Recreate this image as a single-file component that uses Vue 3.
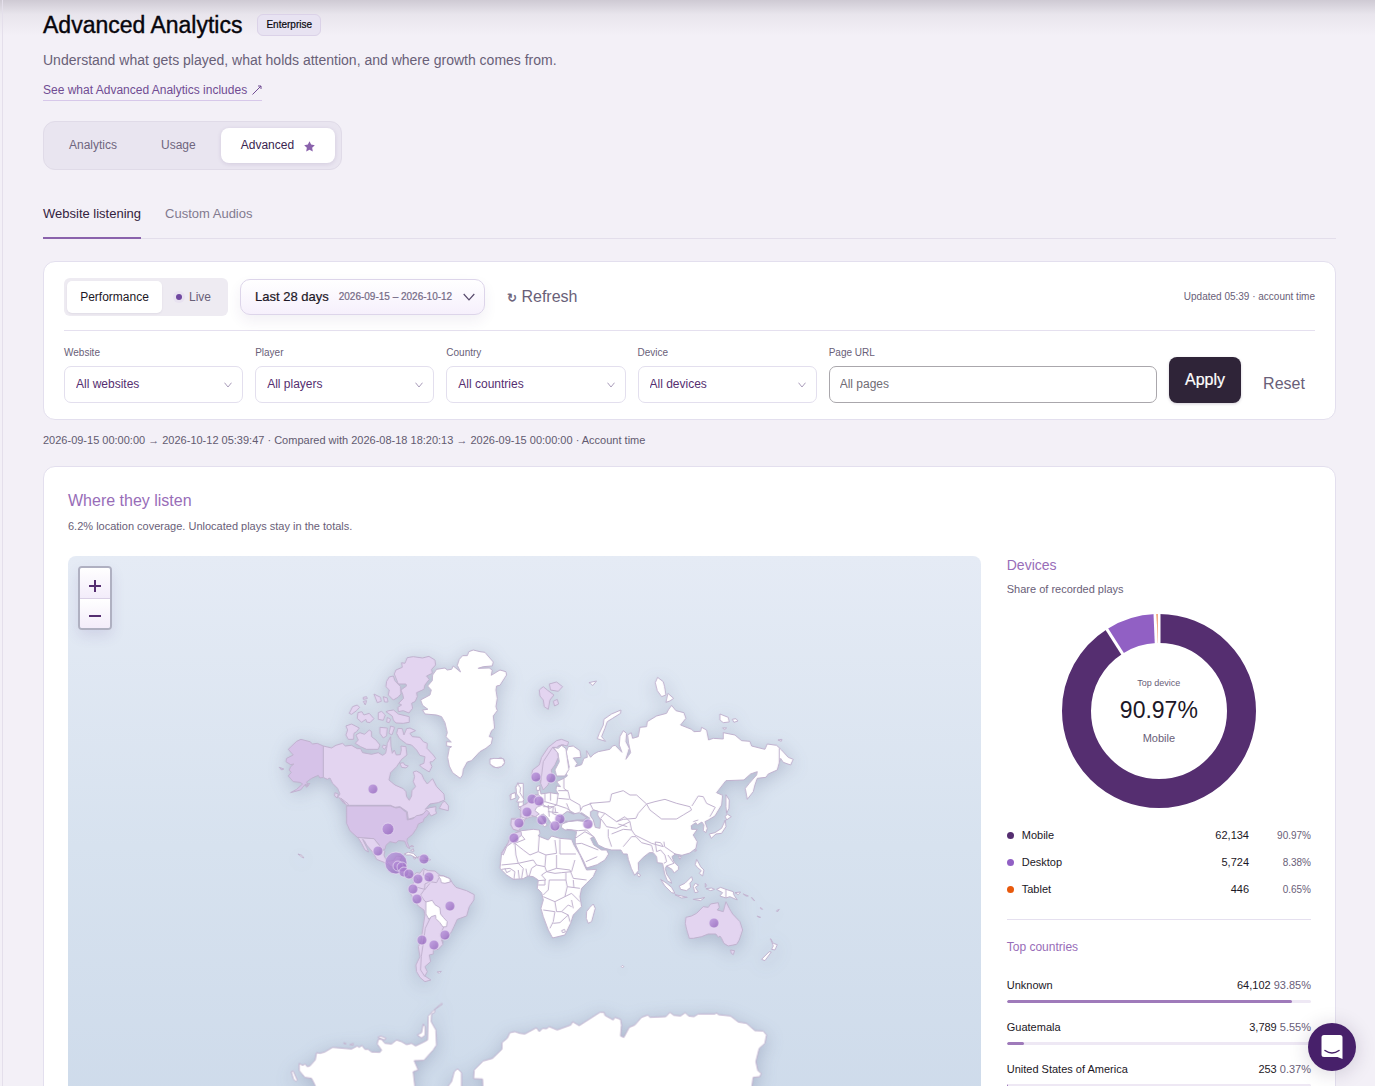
<script setup>
import { ref } from 'vue'

const filters = [
  { id: 'website', label: 'Website', value: 'All websites' },
  { id: 'player', label: 'Player', value: 'All players' },
  { id: 'country', label: 'Country', value: 'All countries' },
  { id: 'device', label: 'Device', value: 'All devices' }
]
const pageUrl = ref('')

const devices = [
  { name: 'Mobile', plays: '62,134', share: '90.97%', color: '#552e70' },
  { name: 'Desktop', plays: '5,724', share: '8.38%', color: '#9160c4' },
  { name: 'Tablet', plays: '446', share: '0.65%', color: '#e8590c' }
]

const countries = [
  { name: 'Unknown', plays: '64,102', share: '93.85%', bar: 93.85 },
  { name: 'Guatemala', plays: '3,789', share: '5.55%', bar: 5.55 },
  { name: 'United States of America', plays: '253', share: '0.37%', bar: 0.37 }
]

// Play clusters: x, y, radius
const pins = [
  [373, 789, 5], [388, 829, 6], [378, 851, 5], [396, 863, 11], [424, 859, 5],
  [398, 866, 5], [402, 867, 5], [404, 872, 5], [409, 874, 5], [418, 879, 5],
  [429, 877, 5], [413, 889, 5], [417, 899, 5], [450, 906, 5], [445, 935, 5],
  [422, 940, 5], [434, 945, 5], [536, 777, 5], [551, 778, 5], [532, 799, 5],
  [539, 801, 5], [527, 812, 5], [519, 823, 5], [542, 820, 5], [560, 819, 5],
  [555, 826, 5], [588, 824, 5], [514, 838, 5], [714, 923, 5]
]
</script>

<template>
  <div class="shell">
    <main class="page">
      <div class="title-row">
        <h1>Advanced Analytics</h1>
        <span class="badge">Enterprise</span>
      </div>
      <p class="lead">Understand what gets played, what holds attention, and where growth comes from.</p>
      <a class="more" href="#">See what Advanced Analytics includes
        <svg width="10" height="10" viewBox="0 0 10 10" fill="none" stroke="currentColor"><path d="M.5 9.5 9 1M6 1H9v3" /></svg>
      </a>

      <div>
        <nav class="segments">
          <button type="button">Analytics</button>
          <button type="button">Usage</button>
          <button type="button" class="active">Advanced
            <svg width="11" height="11" viewBox="0 0 12 12" fill="#8a62ac"><path d="M6 .3 7.800 3.900 11.800 4.500 8.900 7.300 9.600 11.400 6 9.600 2.400 11.400 3.100 7.300 .2 4.500 4.200 3.900Z" /></svg>
          </button>
        </nav>
      </div>

      <nav class="tabs">
        <button type="button" class="active">Website listening</button>
        <button type="button">Custom Audios</button>
      </nav>

      <section class="card controls">
        <div class="toolbar">
          <div class="mode">
            <button type="button" class="active">Performance</button>
            <button type="button"><i class="live-dot"></i>Live</button>
          </div>
          <button type="button" class="range">
            <span class="range-name">Last 28 days</span>
            <span class="range-dates">2026-09-15 – 2026-10-12</span>
            <svg width="12" height="8" viewBox="0 0 12 8" fill="none" stroke="#574a6b" stroke-width="1.200"><path d="M.7 1 6 6.800 11.300 1" /></svg>
          </button>
          <button type="button" class="refresh"><span>↻</span> Refresh</button>
          <span class="updated">Updated 05:39 · account time</span>
        </div>
        <form class="filters" @submit.prevent>
          <div v-for="f in filters" :key="f.id" class="field">
            <label :for="f.id">{{ f.label }}</label>
            <div class="select">
              <select :id="f.id"><option>{{ f.value }}</option></select>
              <svg width="8" height="6" viewBox="0 0 8 6" fill="none" stroke="#a99cba"><path d="M.5.7 4 5 7.500.7" /></svg>
            </div>
          </div>
          <div class="field">
            <label for="page-url">Page URL</label>
            <input id="page-url" v-model="pageUrl" type="text" placeholder="All pages">
          </div>
          <button type="submit" class="apply">Apply</button>
          <button type="reset" class="reset">Reset</button>
        </form>
      </section>

      <p class="period">2026-09-15 00:00:00 → 2026-10-12 05:39:47 · Compared with 2026-08-18 18:20:13 → 2026-09-15 00:00:00 · Account time</p>

      <section class="card listen">
        <h2>Where they listen</h2>
        <p class="note">6.2% location coverage. Unlocated plays stay in the totals.</p>
        <div class="split">
          <div class="map">
            <svg class="world" viewBox="68 556 913 580" preserveAspectRatio="xMidYMin slice" role="img" aria-label="Plays by country">
              <defs>
                <linearGradient id="sea" x1="0" y1="0" x2="0" y2="1">
                  <stop offset="0" stop-color="#e5ebf5" />
                  <stop offset="0.500" stop-color="#d7e2ef" />
                  <stop offset="1" stop-color="#cddaea" />
                </linearGradient>
                <linearGradient id="pin" x1="0" y1="0" x2="1" y2="1">
                  <stop offset="0" stop-color="#bd99df" />
                  <stop offset="1" stop-color="#8b58b5" />
                </linearGradient>
              </defs>
              <rect x="0" y="556" width="1400" height="580" fill="url(#sea)" />
              <g class="land">
                <!-- Alaska, Canada and Greenland -->
                <g transform="translate(270 640) scale(.333333)">
                  <path class="some" d="M160 318 185 324 198 316 218 310 226 318 245 316 262 326 272 326 278 338 305 343 325 338 338 346 347 340 350 325 352 310 362 290 363 318 367 340 373 330 379 345 391 344 394 330 393 318 408 320 411 345 395 358 380 380 362 398 357 420 375 435 400 446 408 455 410 470 418 481 425 468 426 452 437 440 430 425 434 410 430 396 440 393 455 402 462 418 472 432 488 416 500 440 522 462 524 480 505 488 480 492 466 508 480 503 498 500 497 512 500 520 484 528 474 515 440 530 415 538 412 515 390 500 375 502 362 496 238 496 222 490 205 470 210 462 203 445 188 430 180 414 172 418 160 412Z" />
                  <path class="some" d="M412 53 430 50 458 54 477 49 495 60 497 75 485 88 487 100 470 108 478 118 465 135 462 148 440 158 442 170 436 184 425 190 428 205 417 219 400 212 385 215 384 202 395 195 386 190 401 175 398 162 393 150 410 138 408 132 385 132 373 102 378 90 397 82 395 68 405 70ZM358 111 370 108 375 122 392 140 393 162 384 172 370 180 355 165 358 150 348 140 350 124ZM357 212 371 210 385 222 418 230 418 247 400 250 378 249 370 240 367 228 348 215ZM384 265 397 266 402 285 410 266 420 264 437 272 420 280 427 290 450 292 460 305 472 310 471 325 490 345 497 355 488 365 480 366 486 380 478 396 455 382 449 375 462 370 465 350 450 346 440 330 425 315 410 312 388 295 380 280ZM258 285 270 278 284 283 298 270 305 275 305 290 318 300 330 315 325 328 312 328 290 328 272 320 256 310 265 300ZM228 258 245 252 268 264 260 275 252 280 251 298 235 298 228 285 233 270ZM330 262 352 264 350 288 340 294 330 280ZM362 258 374 262 366 285 357 280ZM264 218 276 215 282 225 298 220 312 236 300 248 290 246 288 238 275 247 262 235ZM325 218 335 214 346 225 340 241 325 238ZM238 220 248 200 262 195 269 202 260 212 245 223ZM312 162 332 172 334 184 322 188ZM280 172 290 170 292 176 280 178ZM280 184 290 182 286 195ZM340 170 352 174 354 186 344 186ZM352 232 362 238 358 248 350 246ZM340 315 350 318 344 328 337 322ZM390 370 400 368 405 375 415 378 408 384 395 382ZM195 458 205 462 202 474 194 468ZM212 474 235 492 232 498ZM518 487 525 484 536 498 535 512 508 505Z" />
                  <path class="more-plays" d="M160 318 142 310 128 312 120 305 93 298 80 304 55 328 70 345 50 355 48 365 62 374 72 372 62 380 58 390 64 397 55 408 70 425 90 427 98 432 80 448 62 458 92 450 103 436 115 438 110 426 125 415 145 406 150 414 160 412ZM28 382 42 387 35 390ZM105 434 120 430 110 442Z" />
                  <path d="M562 76 568 58 578 47 592 47 597 35 610 30 630 35 645 37 670 66 667 78 640 80 625 85 658 84 667 90 664 106 690 90 708 95 710 105 690 136 680 138 678 150 682 175 678 200 682 212 670 228 672 245 674 265 665 272 658 290 668 292 664 312 648 325 630 335 605 362 592 366 580 388 578 405 571 415 548 398 538 378 533 352 538 325 545 320 530 318 530 305 544 306 528 290 532 278 525 248 515 230 500 225 465 222 458 210 474 208 458 196 452 180 480 165 484 150 473 138 487 122 488 105 500 88 525 84 532 90 545 88 550 78 572 96ZM660 356 680 360 692 352 704 360 702 374 685 384 668 380 660 372 670 366ZM728 462 735 458 732 475 722 478 720 465ZM745 430 738 440 740 455 750 460 745 500 760 500 760 430Z" />
                </g>

                <!-- United States, Central and South America -->
                <g transform="translate(270 800) scale(.333333)">
                  <path class="more-plays" d="M230 18 362 18 378 24 390 22 410 38 412 60 430 56 440 47 458 44 470 30 478 38 472 48 462 56 460 65 445 72 440 85 428 103 412 116 411 125 420 146 412 142 404 123 385 122 378 129 360 125 348 136 345 148 336 148 325 132 312 116 280 114 262 112 240 92 230 70Z" />
                  <path class="some" d="M264 112 280 114 312 116 325 132 338 150 345 154 342 165 350 184 370 182 380 168 396 170 388 186 390 194 410 196 409 214 430 226 440 218 450 220 460 206 475 212 495 213 510 226 522 228 540 236 548 250 558 262 590 272 613 284 612 300 598 320 590 348 562 358 552 380 545 395 530 415 515 420 519 433 505 448 490 450 490 462 478 465 482 485 465 500 472 515 465 528 483 540 465 545 450 532 440 515 438 495 450 470 445 440 453 425 458 390 465 345 462 330 445 318 430 295 417 272 420 262 432 248 436 230 425 236 410 224 398 220 385 204 362 200 345 188 320 178 310 158 290 135 283 122 278 118 290 142 296 156 285 150 275 130Z" />
                  <path class="line" d="M350 184 362 200M386 190 382 204M409 215 404 220M436 228 444 240M462 210 460 225 478 232 480 245 465 252 464 268 435 260M464 268 452 285 462 300 468 306M480 245 500 248 508 232M480 250 464 270M522 230 522 248 545 244M483 350 466 385 460 430 454 470 452 510 465 530M522 378 512 405 520 428" />
                  <path d="M468 306 487 301 495 314 510 323 512 342 520 352 532 365 530 380 519 381 510 368 498 356 497 346 484 350 477 358 468 342ZM505 227 520 228 540 236 541 246 525 250 514 248 512 238ZM403 162 415 157 430 160 444 174 435 172 422 165 410 165ZM430 172 438 174 434 178ZM502 516 514 514 508 520ZM420 140 432 140 426 136ZM422 152 430 146 432 154ZM84 162 96 166 102 174 94 170Z" />
                  <path class="some" d="M445 170 460 168 470 176 478 176 482 180 465 182 448 180Z" />
                </g>

                <!-- Europe and Asia -->
                <g transform="translate(490 670) scale(.333333)">
                  <path d="M235 230 250 228 270 242 273 262 250 264 262 280 256 290 275 284 282 265 292 262 290 242 302 262 312 252 325 245 360 238 368 228 376 226 396 247 388 225 390 200 400 182 410 190 408 215 418 235 408 268 422 248 416 220 413 195 424 188 428 205 445 200 450 172 470 170 472 155 500 138 530 130 535 120 545 106 558 122 582 128 588 145 572 165 605 178 612 185 632 184 635 172 650 180 656 210 670 205 700 207 700 188 735 195 755 212 780 214 785 228 825 238 832 222 860 226 875 240 895 262 910 268 902 285 880 277 872 265 868 278 862 300 835 312 828 322 802 325 795 345 790 365 772 388 766 355 778 340 800 315 802 305 782 312 762 330 708 332 680 368 698 376 695 405 675 438 655 450 645 455 652 475 648 488 640 482 642 465 636 456 622 465 618 458 604 467 605 478 622 478 610 495 622 515 618 535 600 549 576 556 556 552 546 560 552 575 566 590 566 598 553 609 546 598 530 588 526 595 530 612 542 630 545 640 532 632 524 612 518 580 502 578 500 560 490 548 478 548 460 562 445 578 446 602 434 616 424 595 415 568 412 552 400 552 393 540 365 540 345 535 325 525 312 500 302 505 312 525 335 540 350 540 356 552 345 570 322 584 290 594 282 575 268 548 256 522 256 505 260 485 245 480 225 480 214 472 216 462 235 455 262 452 290 455 300 445 275 428 262 435 245 425 230 428 215 442 210 458 208 468 198 482 190 478 185 462 172 442 160 432 152 436 162 452 172 466 163 470 148 452 140 440 125 440 105 447 100 465 88 482 70 478 63 465 65 445 92 445 95 425 85 415 100 408 112 398 125 385 135 375 145 375 143 352 149 350 153 372 180 368 205 372 198 360 200 348 212 350 200 335 222 325 232 318 225 300 238 292 232 262 228 248Z" />
                  <path d="M190 232 205 235 215 226 228 236 232 265 237 298 225 318 200 318 195 300 208 275 204 250ZM78 352 84 338 88 350 92 352 90 368 102 388 98 396 80 396 88 382 80 372ZM64 372 76 368 78 384 62 390ZM0 268 12 265 40 266 44 278 35 290 18 293 5 286 0 280ZM322 206 328 190 340 165 342 148 365 132 393 120 392 130 368 145 352 155 345 175 335 200 347 214ZM496 38 503 22 520 35 524 50 528 75 515 80 502 62ZM534 70 551 85 540 93 528 97ZM690 150 690 132 715 142 718 156 700 158ZM727 148 738 146 744 153 732 157ZM297 38 320 33 308 47 302 40ZM698 174 710 174 704 179ZM864 210 876 208 874 214ZM708 374 718 390 717 415 710 430 708 410ZM706 440 712 432 724 440 710 450ZM706 450 708 470 695 490 678 492 664 505 658 492 675 488 695 475ZM140 350 150 346 148 362 139 360Z" />
                  <path class="some" d="M125 315 128 300 148 285 155 262 175 232 200 212 215 208 236 216 232 228 215 224 200 232 188 232 203 248 205 262 195 285 184 300 186 318 174 345 160 360 152 340 150 325 130 332ZM148 60 160 50 172 60 192 75 180 90 175 118 163 110 160 90 150 78ZM178 42 200 36 218 50 205 64 182 60ZM190 94 202 88 206 102 194 108ZM92 410 112 400 125 385 135 375 147 375 158 388 160 404 140 412 135 422 148 432 136 440 125 436 105 445 93 440ZM64 448 100 447 96 466 86 482 70 478 63 465Z" />
                  <path class="line" d="M152 340 160 275 188 232M205 228 222 225M222 325 222 355 235 365 240 388 270 405 272 420M205 362 235 362M165 372 165 395 200 405 205 370M165 395 150 400 180 415 200 405 230 415 245 425M160 410 190 410 188 430 210 440M175 425 205 428M270 425 278 410 305 400M360 395 300 400 310 420 345 430M360 395 365 372 400 362 420 375 440 375 470 402 445 430 438 445 400 448 380 455 345 430 332 445 350 470 380 475 420 455M470 402 495 395 525 388 560 400 600 410 605 420 580 435 560 447 515 447 480 420 470 402M606 408 625 378 640 380 650 400 676 412 660 440M420 455 425 480 435 495 485 520 520 530 512 518 496 516M355 478 355 500 365 530M365 492 400 478 425 480M400 530 425 500 438 500 455 518 485 526 490 545M230 478 265 482 290 480 310 500M256 505 285 485 312 500M256 522 275 520 325 540M322 560 288 575M496 516 500 545 512 540 525 555 530 575 522 580M522 515 524 530 560 555M534 555 552 580 530 588M610 455 625 450M240 425 230 400M868 235 868 278M380 455 405 440 420 455M385 462 412 470M182 368 182 392M205 385 238 388M175 405 178 440M195 412 198 430" />
                  <path class="water" d="M302 425 312 420 325 424 323 435 332 450 330 475 316 472 310 450 302 438Z" />
                  <path class="water" d="M212 439 232 424 250 432 268 428 290 442 282 450 262 450 235 454 218 452Z" />
                </g>

                <!-- Africa and Oceania -->
                <g transform="translate(490 800) scale(.333333)">
                  <path d="M78 98 95 92 130 88 148 90 150 100 145 108 175 120 185 108 210 115 245 118 252 135 270 165 283 195 290 210 320 208 310 230 290 250 275 265 270 290 275 320 250 345 242 370 225 405 188 414 175 390 160 350 153 325 160 300 155 278 142 265 145 240 130 230 115 228 100 236 70 238 50 225 30 205 35 160 55 128 62 110ZM290 335 300 322 310 312 316 325 305 365 295 370 289 355ZM512 238 528 248 545 262 555 280 545 278 525 258ZM568 258 585 250 605 230 608 240 600 250 602 262 590 272 572 268ZM555 284 575 288 592 292 575 294ZM610 260 616 250 626 255 616 262 625 276 615 278ZM620 178 628 192 632 200 642 210 638 228 628 220 634 212 622 202 616 194ZM442 218 452 225 448 231 442 226ZM565 168 574 170 570 178ZM680 268 692 262 708 268 730 275 732 285 742 300 720 290 708 294 690 288 698 278ZM735 278 752 276 745 284ZM760 282 775 288 768 288ZM785 292 794 302 788 298ZM812 322 818 328 812 326ZM802 348 812 352 806 352ZM860 332 868 328 862 336ZM842 416 850 430 862 434 855 450 845 448 850 438ZM815 478 838 455 844 456 825 482ZM394 500 398 496 402 500 397 503ZM646 250 650 256 646 262ZM648 266 665 264 674 268 662 272ZM610 298 630 296 645 292 632 302ZM614 154 618 148 620 152Z" />
                  <path class="some" d="M35 160 55 128 62 110 78 98 93 94 95 106 70 125 50 140 40 165ZM588 352 605 348 620 340 640 320 655 322 662 312 685 308 688 322 682 330 700 335 708 305 718 325 728 342 750 365 758 390 748 420 740 433 715 438 702 430 695 415 690 408 685 412 678 402 655 402 635 410 610 415 598 415 590 388 586 370ZM722 450 734 452 730 464 724 460Z" />
                  <path class="line" d="M95 106 105 118 70 132M75 130 78 165 85 190 35 195M75 130 100 150 120 165 145 155 148 110M145 155 168 165 200 160 195 120M210 118 210 162 258 162M168 165 165 200 140 195 125 205 118 228M140 195 130 180 85 190 100 205 95 235M60 205 75 215 72 238M35 208 60 205M45 205 50 218 62 212M85 210 88 236M108 206 112 228M165 200 170 215 155 225 168 240 145 242M200 165 200 205 170 215 195 220 215 218 245 215 255 180M200 205 240 210 250 235 290 240M228 218 228 240 178 240 175 270 160 285M145 255 165 255 165 240M228 240 232 260 225 290 195 305 160 290M232 260 270 265M250 240 252 262M225 290 245 280 270 305M160 330 195 335 190 365 180 385M195 305 200 335 215 335 235 315 245 320M190 370 210 368 235 345M215 335 235 345M245 300 250 325M235 345 240 365M215 392 224 388 226 396 218 398ZM708 268 708 294" />
                </g>

                <!-- Antarctica -->
                <g transform="translate(270 980) scale(.333333)">
                  <path d="M150 360 135 315 125 295 105 292 88 272 88 250 98 256 106 252 112 260 120 258 136 240 140 218 150 220 165 216 188 202 245 207 262 198 268 202 276 196 285 208 295 208 305 216 330 217 335 210 322 192 325 178 335 178 345 190 365 192 380 180 395 185 410 194 425 190 437 198 460 187 473 180 475 108 490 92 515 70 518 72 495 88 494 98 485 102 484 125 498 150 500 195 490 210 462 241 433 242 445 270 430 275 435 318 440 360ZM640 360 638 297 611 296 613 270 640 243 668 235 696 208 696 188 712 175 720 158 735 155 750 160 765 162 800 143 808 155 818 145 830 146 838 140 862 150 903 135 908 125 928 137 990 97 1003 97 1005 106 1030 120 1035 112 1052 118 1055 135 1052 168 1062 172 1078 142 1095 135 1115 112 1134 105 1140 112 1188 110 1200 97 1212 106 1232 108 1246 98 1256 108 1272 110 1285 102 1336 102 1340 98 1345 104 1382 108 1405 126 1430 130 1455 152 1480 153 1490 165 1485 190 1468 205 1458 245 1464 272 1474 280 1470 290 1450 292 1446 320 1446 360ZM532 322 545 305 553 275 563 266 575 278 575 340 530 340ZM64 275 70 273 82 300 78 304 71 298ZM442 165 455 158 460 132 466 140 466 165 455 174ZM324 172 332 168 348 174 345 180ZM221 188 228 190 226 194ZM240 194 250 190 250 196Z" />
                </g>
              </g>
              <g class="pins">
                <circle v-for="(p, i) in pins" :key="i" :cx="p[0]" :cy="p[1]" :r="p[2]" />
              </g>
            </svg>
            <div class="zoom">
              <button type="button" aria-label="Zoom in"><svg width="12" height="12" viewBox="0 0 12 12" stroke="#552e70" stroke-width="2"><path d="M6 0v12M0 6h12" /></svg></button>
              <button type="button" aria-label="Zoom out"><svg width="12" height="12" viewBox="0 0 12 12" stroke="#552e70" stroke-width="2"><path d="M0 6h12" /></svg></button>
            </div>
          </div>

          <aside class="side">
            <h3>Devices</h3>
            <p class="note">Share of recorded plays</p>
            <div class="donut">
              <svg width="194" height="194" viewBox="-97 -97 194 194" fill="none" role="img" aria-label="Device share">
                <g transform="rotate(-90)" stroke-width="29">
                  <circle r="82.500" pathLength="10000" stroke="#9160c4" stroke-dasharray="838 9162" stroke-dashoffset="-9097" />
                  <circle r="82.500" pathLength="10000" stroke="#552e70" stroke-dasharray="9097 903" />
                </g>
                <path d="M-4 -97H0V-68H-3Z" fill="#e8590c" />
                <g stroke="#fff" stroke-width="3">
                  <path d="M0 -60V-98" />
                  <path d="M0 -60V-98" transform="rotate(-2.340)" />
                  <path d="M0 -60V-98" transform="rotate(-32.500)" />
                </g>
              </svg>
              <div class="donut-label">
                <span class="top">Top device</span>
                <strong>90.97%</strong>
                <span class="name">Mobile</span>
              </div>
            </div>
            <ul class="legend">
              <li v-for="d in devices" :key="d.name">
                <i :style="{ background: d.color }"></i>
                <span class="device">{{ d.name }}</span>
                <span class="plays">{{ d.plays }}</span>
                <span class="share">{{ d.share }}</span>
              </li>
            </ul>
            <h4>Top countries</h4>
            <ul class="countries">
              <li v-for="c in countries" :key="c.name">
                <div class="country"><span>{{ c.name }}</span><span>{{ c.plays }} <small>{{ c.share }}</small></span></div>
                <div class="track"><div class="bar" :style="{ width: c.bar + '%' }"></div></div>
              </li>
            </ul>
          </aside>
        </div>
      </section>
    </main>
    <button type="button" class="chat" aria-label="Open chat">
      <svg width="24" height="26" viewBox="0 0 24 26"><path d="M4 1h16a2.500 2.500 0 0 1 2.500 2.500V25L17.500 23H4a2.500 2.500 0 0 1-2.500-2.500v-17A2.500 2.500 0 0 1 4 1Z" fill="#fff" /><path d="M5 16.500q7 5 14 0" fill="none" stroke="#47206a" stroke-width="1.500" stroke-linecap="round" /></svg>
    </button>
  </div>
</template>

<style>
body { margin: 0; background: #f3f0f7; }
</style>

<style scoped>
* { box-sizing: border-box; }
.shell { position: relative; height: 100vh; overflow: hidden; background: #f3f0f7; font-family: "Liberation Sans", Arial, sans-serif; color: #1c1726; font-size: 12px; }
.shell::before { content: ""; position: absolute; inset: 0 0 auto; height: 36px; background: linear-gradient(rgba(60, 50, 70, .2), rgba(60, 50, 70, .06) 40%, rgba(60, 50, 70, 0)); pointer-events: none; }
.shell::after { content: ""; position: absolute; inset: 0 auto 0 2px; width: 1px; background: #e4dfeb; }
.page { padding: 8px 39px 0 43px; }
h1, h2, h3, h4, p, ul { margin: 0; padding: 0; font-weight: 400; }
ul { list-style: none; }
button { font: inherit; border: 0; background: none; padding: 0; color: inherit; cursor: pointer; }
.title-row { display: flex; align-items: center; gap: 15px; height: 33px; position: relative; }
h1 { font-size: 23px; line-height: 32px; color: #08060c; -webkit-text-stroke: .4px; }
.badge { height: 22px; padding: 0 8px; border: 1px solid #dbd2e8; border-radius: 6px; background: #e8e3f2; font-size: 10px; line-height: 20px; color: #08060c; -webkit-text-stroke: .2px; }
.lead { margin-top: 9px; font-size: 14px; line-height: 20px; color: #696078; }
.more { display: inline-flex; align-items: center; gap: 5px; margin-top: 12px; height: 19px; padding-bottom: 2px; border-bottom: 1px solid #d7c8ea; color: #704c93; line-height: 16px; text-decoration: none; }
.segments { display: inline-flex; height: 49px; margin-top: 20px; padding: 6px 6px 6px 5px; border: 1px solid #e0dbe8; border-radius: 12px; background: #e9e5f0; }
.segments button { display: flex; align-items: center; gap: 10px; height: 35px; padding: 0 20px 1px; color: #6f667e; }
.segments button + button { margin-left: 4px; }
.segments button.active { margin-left: 5px; border-radius: 8px; background: #fff; color: #3a2450; box-shadow: 0 1px 4px rgba(80, 50, 110, .14); }
.segments svg { margin-top: 3px; }
.tabs { display: flex; gap: 24px; height: 48px; margin-top: 21px; border-bottom: 1px solid #e3deeb; }
.tabs button { height: 48px; padding-bottom: 1px; border-bottom: 2px solid transparent; font-size: 13px; color: #827a8f; }
.tabs .active { color: #332340; border-color: #8a62ac; }
.card { border: 1px solid #e3dfee; border-radius: 12px; background: #fff; }
.controls { margin-top: 22px; padding: 16px 20px; }
.toolbar { display: flex; align-items: center; height: 53px; padding-bottom: 15px; border-bottom: 1px solid #e5e0ef; }
.mode { display: flex; width: 164px; height: 38px; padding: 3px; border-radius: 6px; background: #eeebf2; color: #696078; }
.mode button { display: flex; align-items: center; justify-content: center; flex: 1; gap: 7px; }
.mode .active { flex: 0 0 95px; border-radius: 5px; background: #fff; color: #1c1726; box-shadow: 0 1px 2px rgba(60, 40, 90, .08); }
.live-dot { width: 6px; height: 6px; border-radius: 50%; background: #7048a0; box-shadow: 0 0 0 3px #e8e2f0; }
.range { display: flex; align-items: center; width: 245px; height: 36px; margin-left: 12px; padding: 0 9px 0 14px; border: 1px solid #ddd5ea; border-radius: 10px; background: linear-gradient(#fff, #f6f0fc); box-shadow: 0 6px 14px rgba(70, 40, 110, .07); }
.range-name { font-size: 13px; -webkit-text-stroke: .2px; }
.range-dates { margin: 0 auto 0 10px; font-size: 10px; color: #746a85; -webkit-text-stroke: .2px; }
.refresh { margin-left: 22px; font-size: 16px; color: #696078; }
.refresh span { font-size: 12px; -webkit-text-stroke: .4px; }
.updated { margin-left: auto; font-size: 10px; color: #696078; }
.filters { display: grid; grid-template-columns: repeat(4, minmax(0, 179fr)) minmax(0, 328fr) 72px 62px; gap: 12px; align-items: end; margin-top: 15px; }
.field label { display: block; margin-bottom: 6px; font-size: 10px; line-height: 14px; color: #696078; }
.select { position: relative; }
.select svg { position: absolute; right: 11px; top: 16px; pointer-events: none; }
select, input { display: block; width: 100%; height: 37px; margin: 0; border: 1px solid #e3dfee; border-radius: 7px; background: #fff; font: inherit; color: #552e70; }
select { appearance: none; padding: 0 11px 2px; }
input { padding: 0 10px 2px; border-color: #aaa7ac; color: #333; }
input::placeholder { color: #706c74; }
.apply { height: 46px; border-radius: 8px; background: #2f2438; color: #fff; font-size: 16px; -webkit-text-stroke: .2px; box-shadow: 0 1px 3px rgba(40, 20, 60, .2); }
.reset { height: 38px; font-size: 16px; color: #696078; }
.period { margin-top: 12px; font-size: 11px; line-height: 16px; color: #625a70; }
.listen { margin-top: 18px; padding: 24px; }
h2 { font-size: 16px; line-height: 20px; color: #986db8; }
.note { font-size: 11px; line-height: 16px; color: #696078; }
.listen > .note { margin-top: 7px; }
.split { display: grid; grid-template-columns: minmax(0, 3fr) minmax(0, 1fr); gap: 26px; margin-top: 22px; }
.map { position: relative; height: 580px; border-radius: 8px; overflow: hidden; }
.world { display: block; width: 100%; height: 100%; }
.land { fill: #fff; stroke: #c0b1ce; stroke-width: 3; stroke-linejoin: round; filter: drop-shadow(0 4px 9px rgba(60, 65, 110, .24)); }
.land .some { fill: #e3d4f0; }
.land .more-plays { fill: #d6c2e8; }
.land .line { fill: none; }
.land .water { fill: #c7d0e0; }
.pins { fill: url(#pin); fill-opacity: .76; stroke: #eadff4; stroke-opacity: .7; stroke-width: 1; }
.zoom { position: absolute; left: 10px; top: 10px; width: 34px; height: 64px; display: flex; flex-direction: column; border: 2px solid #afb0c1; border-radius: 4px; overflow: hidden; box-shadow: 0 6px 14px rgba(80, 60, 140, .12); }
.zoom button { display: grid; place-items: center; flex: 1; padding-top: 6px; background: linear-gradient(#fff, #f3ecfa); }
.zoom button + button { border-top: 1px solid #d9cfe5; }
h3 { font-size: 14px; line-height: 18px; color: #986db8; }
.side h3 + .note { margin-top: 7px; }
.donut { display: grid; place-items: center; margin-top: 17px; }
.donut > * { grid-area: 1 / 1; }
.donut svg { display: block; }
.donut-label { display: flex; flex-direction: column; align-items: center; color: #696078; }
.top { font-size: 9px; line-height: 12px; }
.donut strong { margin: 7px 0; font-size: 23px; font-weight: 400; line-height: 28px; color: #1c1726; }
.name { font-size: 11px; line-height: 14px; }
.legend { display: grid; gap: 11px; margin-top: 19px; padding-bottom: 22px; border-bottom: 1px solid #e5e0ef; }
.legend li { display: flex; align-items: center; height: 16px; font-size: 11px; }
.legend i { width: 7px; height: 7px; margin-right: 8px; border-radius: 50%; }
.device { flex: 1; }
.share { width: 62px; font-size: 10px; text-align: right; color: #696078; }
h4 { margin-top: 19px; font-size: 12px; line-height: 16px; color: #986db8; }
.countries { display: grid; gap: 15px; margin-top: 21px; font-size: 11px; }
.country { display: flex; justify-content: space-between; line-height: 18px; }
.country small { font-size: 11px; color: #696078; }
.track { height: 3px; margin-top: 6px; border-radius: 2px; background: #eee8f4; overflow: hidden; }
.bar { height: 100%; border-radius: 2px; background: #9f7aba; }
.chat { position: absolute; right: 19px; bottom: 15px; display: grid; place-items: center; width: 48px; height: 48px; border-radius: 50%; background: #47206a; box-shadow: 0 2px 20px rgba(40, 20, 60, .18); }
</style>
